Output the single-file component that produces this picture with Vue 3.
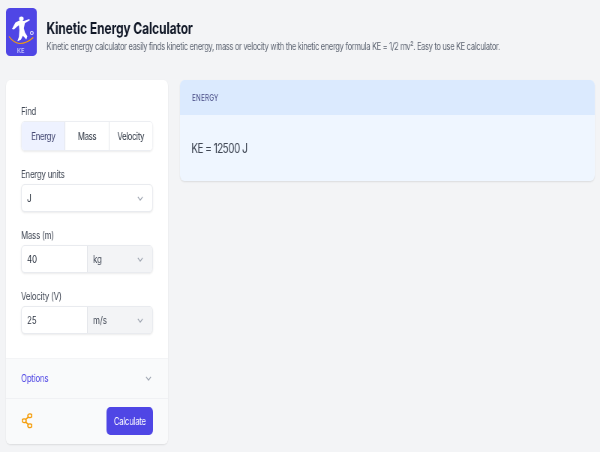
<script setup>
const tabs = ['Energy', 'Mass', 'Velocity']
const chevron = 'M1 1l4 4 4-4'
</script>

<template>
  <div class="page">
    <header class="head">
      <svg class="logo" viewBox="0 0 31 48" preserveAspectRatio="none">
        <rect width="31" height="48" rx="4" fill="#4f46e5" />
        <circle cx="15.500" cy="10.800" r="2.300" fill="#fff" />
        <path d="M6 21l3.500-6.500 4-2 4.500.5 5.500-2 .5 1.200-5 3-1 5 1 4 2.500 4-1 3.300-3.500-3.800-2 4-3.500 1.500 1.500-4.500.5-6.500-.5-5-2 1.500-3 2.800z" fill="#fff" />
        <path d="M3 28.500c3 4 6 7 11 7 4 0 9-2 13.500-6" fill="none" stroke="#f59e0b" stroke-width="1.100" />
        <circle cx="26" cy="25" r="1.500" fill="none" stroke="#e5e7ff" stroke-width=".8" />
        <text x="15" y="45" class="logo-t" text-anchor="middle">KE</text>
      </svg>
      <div class="titles">
        <h1>Kinetic Energy Calculator</h1>
        <p>Kinetic energy calculator easily finds kinetic energy, mass or velocity with the kinetic energy formula KE = 1/2 mv². Easy to use KE calculator.</p>
      </div>
    </header>

    <div class="cols">
      <aside class="side">
        <div class="form">
          <label class="first">Find</label>
          <div class="seg">
            <button v-for="(t, i) in tabs" :key="t" :class="{ on: i === 0 }">{{ t }}</button>
          </div>

          <label>Energy units</label>
          <div class="box select">
            <span>J</span>
            <svg class="chev" viewBox="0 0 10 6"><path :d="chevron" /></svg>
          </div>

          <label>Mass (m)</label>
          <div class="box group">
            <span class="val">40</span>
            <span class="unit">kg<svg class="chev" viewBox="0 0 10 6"><path :d="chevron" /></svg></span>
          </div>

          <label>Velocity (V)</label>
          <div class="box group">
            <span class="val">25</span>
            <span class="unit">m/s<svg class="chev" viewBox="0 0 10 6"><path :d="chevron" /></svg></span>
          </div>
        </div>

        <div class="options">
          <span>Options</span>
          <svg class="chev" viewBox="0 0 10 6"><path :d="chevron" /></svg>
        </div>

        <div class="foot">
          <svg class="share" viewBox="0 0 10 16" preserveAspectRatio="none">
            <circle cx="2.300" cy="7.700" r="1.900" />
            <circle cx="7.700" cy="2.700" r="1.900" />
            <circle cx="7.700" cy="12.700" r="1.900" />
            <path d="M3.700 6.500L6.300 4M3.700 9l2.600 2.500" />
          </svg>
          <button class="calc">Calculate</button>
        </div>
      </aside>

      <main class="result">
        <div class="r-head">ENERGY</div>
        <div class="r-body">KE = 12500 J</div>
      </main>
    </div>
  </div>
</template>

<style>
html, body { margin: 0; background: #f3f4f6; overflow: hidden; }
</style>

<style scoped>
.page {
  width: 800px;
  height: 452px;
  box-sizing: border-box;
  padding: 8px 7px 8px 8px;
  transform: scaleX(.75);
  transform-origin: 0 0;
  will-change: transform;
  font-family: Inter, "Liberation Sans", sans-serif;
  color: #374151;
}
.head { display: flex; height: 72px; gap: 12px; }
.logo { width: 41px; height: 48px; flex: none; }
.logo-t { font-size: 6px; fill: #e5e7ff; font-family: Inter, sans-serif; }
.titles { padding-top: 10px; padding-left: 1px; }
h1 { margin: 0; font-size: 16px; line-height: 20px; font-weight: 700; color: #111827; letter-spacing: -.13px; }
.titles p { margin: 2px 0 0; font-size: 10px; line-height: 12px; color: #5f6673; letter-spacing: -.42px; }
.cols { display: flex; gap: 16px; align-items: flex-start; }
.side {
  width: 216px;
  height: 364px;
  background: #fff;
  border-radius: 6px;
  box-shadow: 0 1px 2px rgba(0,0,0,.1);
  display: flex;
  flex-direction: column;
  overflow: hidden;
  flex: none;
}
.form { padding: 0 20px; height: 278px; }
label { display: block; font-size: 10.500px; line-height: 12px; padding-top: 1px; color: #414855; margin: 17px 0 3px; letter-spacing: -.3px; }
label.first { margin-top: 25px; }
.seg {
  display: flex;
  height: 30px;
  box-sizing: border-box;
  border: 1px solid #eceef2;
  border-radius: 5px;
  box-shadow: 0 1px 2px rgba(0,0,0,.08);
  overflow: hidden;
}
.seg button {
  flex: 1;
  border: 0;
  border-left: 1px solid #e5e7eb;
  background: #fff;
  font: 10.500px Inter, sans-serif;
  letter-spacing: -.5px;
  color: #2f3744;
  padding: 0;
}
.seg button:first-child { border-left: 0; }
.seg button.on { background: #eef2ff; color: #434772; }
.box {
  height: 28px;
  box-sizing: border-box;
  border: 1px solid #e9ebef;
  border-radius: 5px;
  box-shadow: 0 1px 2px rgba(0,0,0,.08);
  display: flex;
  align-items: center;
  font-size: 10.500px;
  color: #2f3744;
  overflow: hidden;
  background: #fff;
}
.select { justify-content: space-between; padding: 0 12px 0 7px; }
.val { flex: 1; padding-left: 7px; }
.unit {
  width: 87px;
  align-self: stretch;
  box-sizing: border-box;
  padding: 0 12px 0 7px;
  background: #f3f4f6;
  border-left: 1px solid #e5e7eb;
  display: flex;
  align-items: center;
  justify-content: space-between;
  color: #414855;
}
.chev { width: 8px; height: 5px; fill: none; stroke: #9ca3af; stroke-width: 1.4; }
.options {
  height: 40px;
  box-sizing: border-box;
  background: #f9fafb;
  border-top: 1px solid #f3f4f6;
  padding: 0 22px 0 20px;
  display: flex;
  align-items: center;
  justify-content: space-between;
  font-size: 10.500px;
  letter-spacing: -.3px;
  color: #4f46e5;
}
.foot {
  flex: 1;
  background: #f9fafb;
  border-top: 1px solid #f0f1f4;
  padding: 0 20px 2px 21px;
  display: flex;
  align-items: center;
  justify-content: space-between;
}
.share { width: 14px; height: 16px; fill: none; stroke: #f59e0b; stroke-width: 1.3; }
.calc {
  width: 62px;
  height: 28px;
  border: 0;
  border-radius: 5px;
  background: #4f46e5;
  color: #fff;
  font: 10.500px Inter, sans-serif;
  letter-spacing: -.4px;
  padding: 2px 0 0;
}
.result {
  flex: 1;
  height: 101px;
  border-radius: 6px;
  overflow: hidden;
  box-shadow: 0 1px 2px rgba(0,0,0,.1);
  background: #eff6ff;
}
.r-head {
  height: 35px;
  background: #dbeafe;
  display: flex;
  align-items: center;
  padding-left: 16px;
  font-size: 8.500px;
  letter-spacing: .2px;
  color: #434782;
}
.r-body {
  height: 66px;
  display: flex;
  align-items: center;
  padding-left: 15px;
  font-size: 13.500px;
  letter-spacing: -.8px;
  color: #414855;
}
</style>
